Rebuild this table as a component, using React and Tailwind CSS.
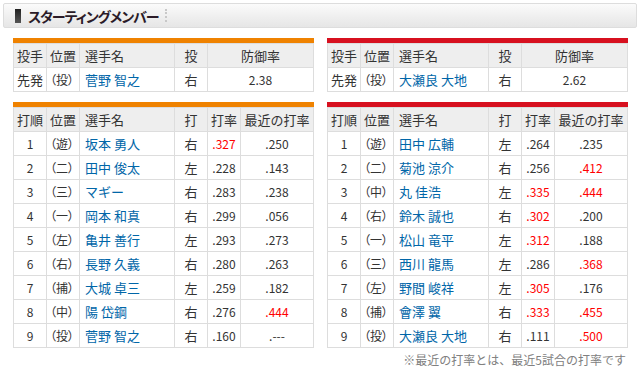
const pitchers = {
  left: { pos: "（投）", name: "菅野 智之", hand: "右", era: "2.38" },
  right: { pos: "（投）", name: "大瀬良 大地", hand: "右", era: "2.62" },
};

// [打順, 位置, 選手名, 打, 打率, 赤?, 最近, 赤?]
const lineups = {
  left: [
    [1, "（遊）", "坂本 勇人", "右", ".327", true, ".250", false],
    [2, "（二）", "田中 俊太", "左", ".228", false, ".143", false],
    [3, "（三）", "マギー", "右", ".283", false, ".238", false],
    [4, "（一）", "岡本 和真", "右", ".299", false, ".056", false],
    [5, "（左）", "亀井 善行", "左", ".293", false, ".273", false],
    [6, "（右）", "長野 久義", "右", ".280", false, ".263", false],
    [7, "（捕）", "大城 卓三", "左", ".259", false, ".182", false],
    [8, "（中）", "陽 岱鋼", "右", ".276", false, ".444", true],
    [9, "（投）", "菅野 智之", "右", ".160", false, ".---", false],
  ],
  right: [
    [1, "（遊）", "田中 広輔", "左", ".264", false, ".235", false],
    [2, "（二）", "菊池 涼介", "右", ".256", false, ".412", true],
    [3, "（中）", "丸 佳浩", "左", ".335", true, ".444", true],
    [4, "（右）", "鈴木 誠也", "右", ".302", true, ".200", false],
    [5, "（一）", "松山 竜平", "左", ".312", true, ".188", false],
    [6, "（三）", "西川 龍馬", "左", ".286", false, ".368", true],
    [7, "（左）", "野間 峻祥", "左", ".305", true, ".176", false],
    [8, "（捕）", "會澤 翼", "右", ".333", true, ".455", true],
    [9, "（投）", "大瀬良 大地", "右", ".111", false, ".500", true],
  ],
};

const cell = "h-[24px] border-r border-b border-[#dddddd] flex items-center";

function Pos({ children }) {
  return (
    <div className={`${cell} pl-[3px] text-[12px] [font-feature-settings:'palt']`}>
      {children}
    </div>
  );
}

function PitcherTable({ bar, p }) {
  return (
    <div>
      <div className={`h-[5px] ${bar}`} />
      <div className="border-l border-t border-[#dddddd]">
        <div className="grid grid-cols-[33px_33px_95px_33px_106px] bg-[#eeeeee]">
          <div className={`${cell} justify-center`}>投手</div>
          <div className={`${cell} justify-center`}>位置</div>
          <div className={`${cell} pl-[5px]`}>選手名</div>
          <div className={`${cell} justify-center`}>投</div>
          <div className={`${cell} justify-center`}>防御率</div>
        </div>
        <div className="grid grid-cols-[33px_33px_95px_33px_106px] bg-white">
          <div className={`${cell} justify-center`}>先発</div>
          <Pos>{p.pos}</Pos>
          <div className={`${cell} pl-[5px] text-[#0066a8]`}>{p.name}</div>
          <div className={`${cell} justify-center`}>{p.hand}</div>
          <div className={`${cell} justify-center text-[12px]`}>{p.era}</div>
        </div>
      </div>
    </div>
  );
}

function LineupTable({ bar, rows }) {
  return (
    <div>
      <div className={`h-[5px] ${bar}`} />
      <div className="border-l border-t border-[#dddddd]">
        <div className="grid grid-cols-[33px_33px_95px_33px_33px_73px] bg-[#eeeeee]">
          <div className={`${cell} justify-center`}>打順</div>
          <div className={`${cell} justify-center`}>位置</div>
          <div className={`${cell} pl-[5px]`}>選手名</div>
          <div className={`${cell} justify-center`}>打</div>
          <div className={`${cell} justify-center`}>打率</div>
          <div className={`${cell} justify-center`}>最近の打率</div>
        </div>
        {rows.map((r) => (
          <div
            key={r[0]}
            className="grid grid-cols-[33px_33px_95px_33px_33px_73px] bg-white"
          >
            <div className={`${cell} justify-center text-[12px]`}>{r[0]}</div>
            <Pos>{r[1]}</Pos>
            <div className={`${cell} pl-[5px] text-[#0066a8]`}>{r[2]}</div>
            <div className={`${cell} justify-center`}>{r[3]}</div>
            <div
              className={`${cell} justify-center text-[12px] ${r[5] ? "text-[#ff0000]" : ""}`}
            >
              {r[4]}
            </div>
            <div
              className={`${cell} justify-center text-[12px] ${r[7] ? "text-[#ff0000]" : ""}`}
            >
              {r[6]}
            </div>
          </div>
        ))}
      </div>
    </div>
  );
}

export default function App() {
  return (
    <div className="w-[640px] h-[371px] bg-white text-[13px] text-[#333333] font-['Noto_Sans_CJK_JP','Noto_Sans',sans-serif] overflow-hidden">
      <div className="mx-[3px] mt-[3px] h-[25px] border border-[#dddddd] rounded-[2px] bg-linear-to-b from-[#fbfbfb] via-[#f0f0f0] to-[#e6e6e6] flex items-center">
        <div className="ml-[11px] w-[6px] h-[14px] bg-linear-to-b from-[#222222] to-[#555555]" />
        <h1 className="ml-[7px] text-[14px] font-bold leading-none tracking-[-1px] text-[#2b1b28] [font-feature-settings:'palt']">
          スターティングメンバー
        </h1>
        <div className="ml-[6px] h-[13px] border-l-2 border-dotted border-[#c8c8c8]" />
      </div>

      <div className="mt-[10px] pl-[13px] flex gap-[13px]">
        <div className="w-[301px] flex flex-col gap-[10px]">
          <PitcherTable bar="bg-[#ef8200]" p={pitchers.left} />
          <LineupTable bar="bg-[#ef8200]" rows={lineups.left} />
        </div>
        <div className="w-[301px] flex flex-col gap-[10px]">
          <PitcherTable bar="bg-[#d7101f]" p={pitchers.right} />
          <LineupTable bar="bg-[#d7101f]" rows={lineups.right} />
          <p className="-mt-[7px] pr-[2px] text-right text-[12px] text-[#808080]">
            ※最近の打率とは、最近5試合の打率です
          </p>
        </div>
      </div>
    </div>
  );
}
